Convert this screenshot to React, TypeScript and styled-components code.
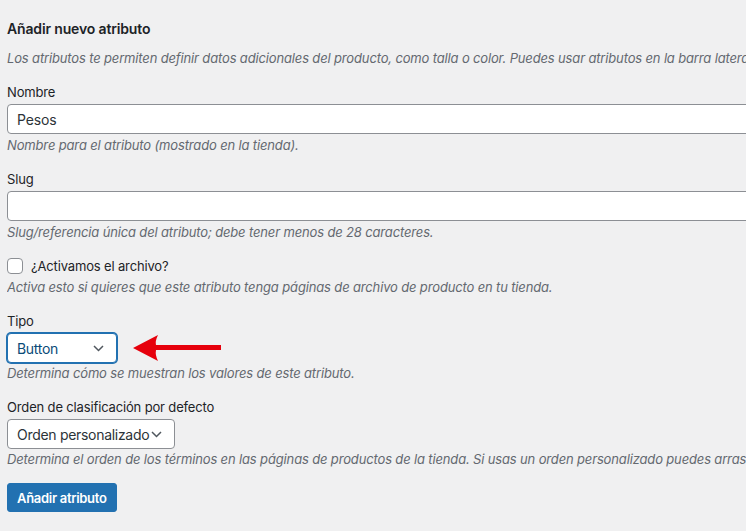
import React from "react";
import styled, { createGlobalStyle } from "styled-components";

const GlobalStyle = createGlobalStyle`
  html, body {
    margin: 0;
    padding: 0;
    background: #f0f0f1;
  }
  body {
    font-family: Inter, "Liberation Sans", sans-serif;
    font-size: 13px;
    letter-spacing: -0.15px;
    color: #1d2327;
    overflow: hidden;
  }
`;

const Page = styled.div`
  width: 746px;
  height: 531px;
  padding: 19px 0 0 7px;
  box-sizing: border-box;
  overflow: hidden;
`;

const Title = styled.h2`
  margin: 0;
  font-size: 14px;
  line-height: 20px;
  font-weight: 600;
  color: #1d2327;
  white-space: nowrap;
`;

const Description = styled.p<{ $top?: number }>`
  margin: ${(p) => p.$top ?? 2}px 0 0;
  font-size: 13px;
  line-height: 19px;
  font-style: italic;
  color: #646970;
  white-space: nowrap;
  overflow: hidden;
`;

const Field = styled.div`
  margin-top: 15px;
`;

const Label = styled.label`
  display: block;
  font-size: 13px;
  line-height: 19px;
  color: #1d2327;
  margin-bottom: 2px;
`;

const TextInput = styled.input`
  display: block;
  box-sizing: border-box;
  width: 760px;
  height: 30px;
  margin: 0;
  padding: 0 9px;
  border: 1px solid #8c8f94;
  border-radius: 4px;
  background: #fff;
  font-family: inherit;
  font-size: 14px;
  letter-spacing: -0.15px;
  color: #2c3338;
  outline: none;
`;

const CheckRow = styled.label`
  display: flex;
  align-items: center;
  gap: 8px;
  height: 20px;
  margin-top: 14px;
  line-height: 19px;
  color: #1d2327;
`;

const Checkbox = styled.span`
  width: 16px;
  height: 16px;
  box-sizing: border-box;
  border: 1px solid #8c8f94;
  border-radius: 4px;
  background: #fff;
`;

const SelectRow = styled.div`
  display: flex;
  align-items: center;
  gap: 16px;
`;

const Select = styled.div<{ $focused?: boolean; $width: number }>`
  display: flex;
  align-items: center;
  justify-content: space-between;
  box-sizing: border-box;
  width: ${(p) => p.$width}px;
  height: 30px;
  padding: 0 12px 0 9px;
  border: 1px solid ${(p) => (p.$focused ? "#2271b1" : "#8c8f94")};
  box-shadow: ${(p) => (p.$focused ? "0 0 0 1px #2271b1" : "none")};
  border-radius: 4px;
  background: #fff;
  font-size: 14px;
  letter-spacing: -0.3px;
  color: ${(p) => (p.$focused ? "#0a4b78" : "#2c3338")};
  white-space: nowrap;
`;

const Chevron = () => (
  <svg width="11" height="7" viewBox="0 0 11 7" fill="none">
    <path d="M1 1l4.5 4.5L10 1" stroke="#50575e" strokeWidth="1.5" />
  </svg>
);

const Arrow = () => (
  <svg width="90" height="28" viewBox="0 0 90 28">
    <path d="M0 14 L25 1 Q22 7 23 11 L88 11 L88 16 L23 16 Q22 21 25 27 Z" fill="#e6000c" />
  </svg>
);

const PrimaryButton = styled.button`
  display: block;
  margin-top: 14px;
  height: 29px;
  padding: 0 9px;
  border: 1px solid #2271b1;
  border-radius: 3px;
  background: #2271b1;
  color: #fff;
  font-family: inherit;
  font-size: 13px;
  letter-spacing: -0.3px;
  font-weight: 600;
  cursor: pointer;
`;

export default function App() {
  return (
    <>
      <GlobalStyle />
      <Page>
        <Title>Añadir nuevo atributo</Title>
        <Description $top={10}>
          Los atributos te permiten definir datos adicionales del producto, como talla o color. Puedes usar atributos en la barra lateral de la tienda usando los widgets de "navegación por capas".
        </Description>

        <Field>
          <Label>Nombre</Label>
          <TextInput defaultValue="Pesos" />
          <Description>Nombre para el atributo (mostrado en la tienda).</Description>
        </Field>

        <Field>
          <Label>Slug</Label>
          <TextInput defaultValue="" />
          <Description>Slug/referencia única del atributo; debe tener menos de 28 caracteres.</Description>
        </Field>

        <CheckRow>
          <Checkbox />
          ¿Activamos el archivo?
        </CheckRow>
        <Description>Activa esto si quieres que este atributo tenga páginas de archivo de producto en tu tienda.</Description>

        <Field>
          <Label>Tipo</Label>
          <SelectRow>
            <Select $focused $width={110}>
              Button
              <Chevron />
            </Select>
            <Arrow />
          </SelectRow>
          <Description $top={1}>Determina cómo se muestran los valores de este atributo.</Description>
        </Field>

        <Field>
          <Label>Orden de clasificación por defecto</Label>
          <Select $width={168}>
            Orden personalizado
            <Chevron />
          </Select>
          <Description $top={1}>
            Determina el orden de los términos en las páginas de productos de la tienda. Si usas un orden personalizado puedes arrastrar y soltar los términos.
          </Description>
        </Field>

        <PrimaryButton>Añadir atributo</PrimaryButton>
      </Page>
    </>
  );
}
